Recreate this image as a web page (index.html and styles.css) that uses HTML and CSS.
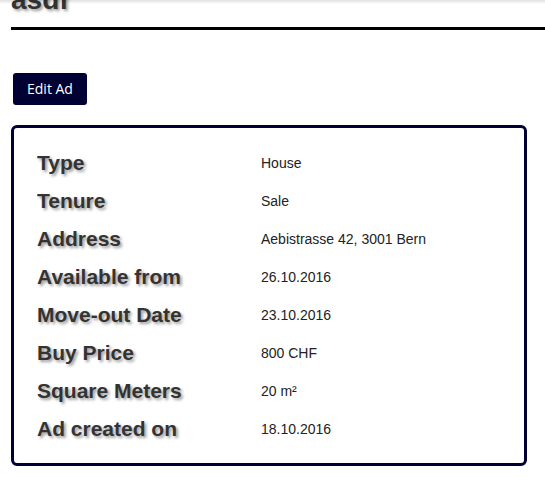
FILE: index.html
```html
<!DOCTYPE html>
<html>
<head>
<meta charset="utf-8">
<link rel="stylesheet" href="styles.css">
</head>
<body>
<div class="topshade"></div>
<main class="page">
  <h1 class="title">asdf</h1>
  <div class="actions"><button class="btn">Edit Ad</button></div>
  <section class="card">
    <div class="row"><span class="label">Type</span><span class="value">House</span></div>
    <div class="row"><span class="label">Tenure</span><span class="value">Sale</span></div>
    <div class="row"><span class="label">Address</span><span class="value">Aebistrasse 42, 3001 Bern</span></div>
    <div class="row"><span class="label">Available from</span><span class="value">26.10.2016</span></div>
    <div class="row"><span class="label">Move-out Date</span><span class="value">23.10.2016</span></div>
    <div class="row"><span class="label">Buy Price</span><span class="value">800 CHF</span></div>
    <div class="row"><span class="label">Square Meters</span><span class="value">20 m²</span></div>
    <div class="row"><span class="label">Ad created on</span><span class="value">18.10.2016</span></div>
  </section>
</main>
</body>
</html>
```
FILE: styles.css
```css
html, body {
  margin: 0;
  padding: 0;
  background: #fff;
  overflow: hidden;
}
body {
  font-family: "Liberation Sans", Arial, sans-serif;
  color: #333;
}
.topshade {
  position: fixed;
  top: 0;
  left: 0;
  right: 0;
  height: 4px;
  background: linear-gradient(to bottom, rgba(0,0,0,0.12), rgba(0,0,0,0));
  z-index: 5;
}
.page {
  padding-left: 11px;
  margin-top: -16px;
}
.title {
  margin: 0;
  font-size: 28px;
  line-height: 32px;
  font-weight: bold;
  color: #333;
  text-shadow: 2px 2px 3px #999;
  padding-bottom: 11px;
  border-bottom: 3px solid #000;
}
.actions {
  padding: 43px 0 0 2px;
}
.btn {
  display: block;
  box-sizing: border-box;
  height: 32px;
  padding: 0 14px;
  border: none;
  border-radius: 3px;
  background: #000033;
  color: #fff;
  font-family: "Open Sans", sans-serif;
  font-size: 14px;
  line-height: 32px;
}
.card {
  box-sizing: border-box;
  width: 516px;
  margin-top: 20px;
  border: 3px solid #000033;
  border-radius: 6px;
  padding: 16px 0 15px 23px;
}
.row {
  display: grid;
  grid-template-columns: 224px 1fr;
  align-items: start;
  height: 38px;
  line-height: 38px;
}
.label {
  font-size: 21px;
  font-weight: bold;
  color: #333;
  text-shadow: 2px 2px 3px #999;
}
.value {
  font-size: 14px;
  color: #222;
}
```
